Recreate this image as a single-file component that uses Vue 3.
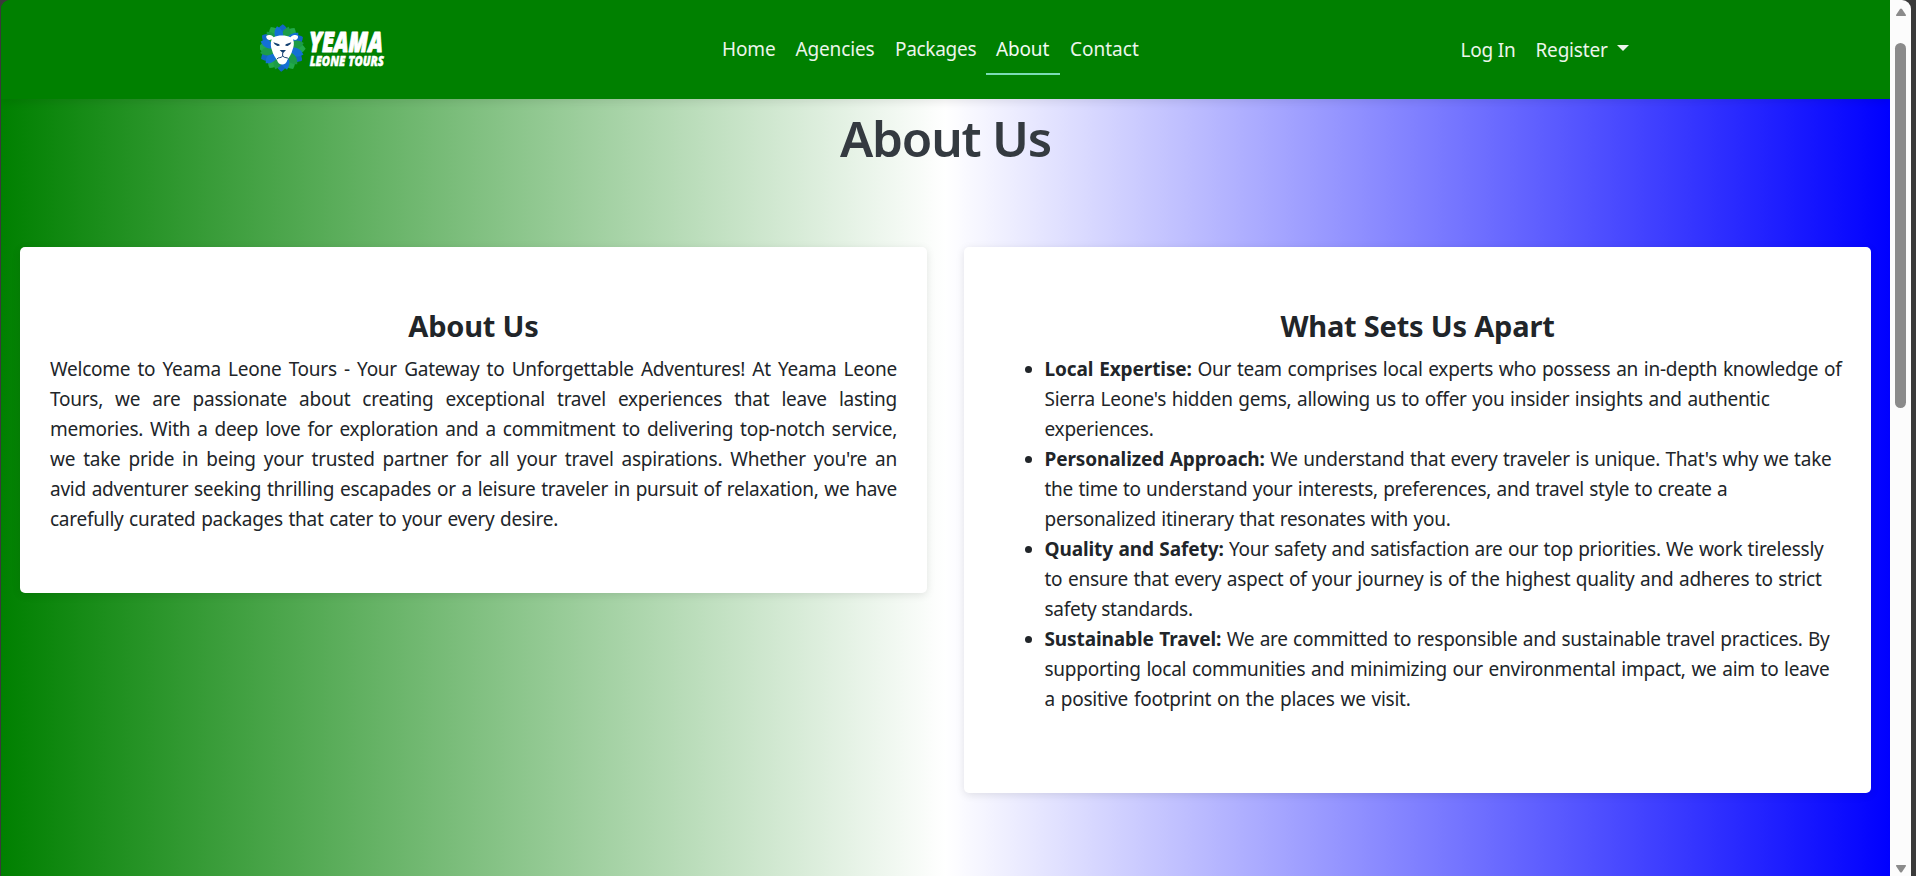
<script setup>
const links = [
  { text: 'Home', cls: 'home' },
  { text: 'Agencies', cls: 'agencies' },
  { text: 'Packages', cls: 'packages' },
  { text: 'About', cls: 'about active' },
  { text: 'Contact', cls: 'contact' },
]

const intro = [
  { text: 'Welcome to Yeama Leone Tours - Your Gateway to Unforgettable Adventures! At Yeama Leone', w: 847 },
  { text: 'Tours, we are passionate about creating exceptional travel experiences that leave lasting', w: 847 },
  { text: 'memories. With a deep love for exploration and a commitment to delivering top-notch service,', w: 847 },
  { text: "we take pride in being your trusted partner for all your travel aspirations. Whether you're an", w: 847 },
  { text: 'avid adventurer seeking thrilling escapades or a leisure traveler in pursuit of relaxation, we have', w: 847 },
  { text: 'carefully curated packages that cater to your every desire.', w: 508 },
]

const points = [
  {
    title: 'Local Expertise:',
    lines: [
      { text: 'Our team comprises local experts who possess an in-depth knowledge of', w: 797 },
      { text: "Sierra Leone's hidden gems, allowing us to offer you insider insights and authentic", w: 725 },
      { text: 'experiences.', w: 108 },
    ],
  },
  {
    title: 'Personalized Approach:',
    lines: [
      { text: "We understand that every traveler is unique. That's why we take", w: 787 },
      { text: 'the time to understand your interests, preferences, and travel style to create a', w: 683 },
      { text: 'personalized itinerary that resonates with you.', w: 406 },
    ],
  },
  {
    title: 'Quality and Safety:',
    lines: [
      { text: 'Your safety and satisfaction are our top priorities. We work tirelessly', w: 779 },
      { text: 'to ensure that every aspect of your journey is of the highest quality and adheres to strict', w: 777 },
      { text: 'safety standards.', w: 148 },
    ],
  },
  {
    title: 'Sustainable Travel:',
    lines: [
      { text: 'We are committed to responsible and sustainable travel practices. By', w: 785 },
      { text: 'supporting local communities and minimizing our environmental impact, we aim to leave', w: 785 },
      { text: 'a positive footprint on the places we visit.', w: 366 },
    ],
  },
]

const outerLeaves = Array.from({ length: 12 }, (_, i) => ({ a: i * 30 + 2, c: i % 2 ? '#22a94a' : '#1266c4' }))
const innerLeaves = Array.from({ length: 12 }, (_, i) => ({ a: i * 30 + 17, c: i % 2 ? '#1470d4' : '#1c9c48' }))
</script>

<template>
  <div class="window">
    <div class="page">
      <header class="nav">
        <svg class="logo" viewBox="30 9 378 210" width="126" height="70">
          <g>
            <path v-for="l in outerLeaves" :key="'o' + l.a" :fill="l.c" :transform="`translate(96 114) rotate(${l.a})`" d="M0 -71 C20 -58 24 -38 8 -20 L-8 -20 C-24 -38 -20 -58 0 -71Z" />
            <path v-for="l in innerLeaves" :key="'i' + l.a" :fill="l.c" :transform="`translate(96 114) rotate(${l.a})`" d="M0 -67 C15 -54 17 -36 5 -20 L-5 -20 C-17 -36 -15 -54 0 -67Z" />
          </g>
          <path fill="#fff" d="M65 88 C52 97 42 76 54 76 C62 73 68 77 71 82 C82 75 110 75 121 82 C125 77 131 73 139 76 C150 76 142 97 129 88 C134 99 131 111 127 121 C124 134 117 142 112 150 C108 168 85 168 81 150 C76 142 69 134 66 121 C62 111 61 99 65 88Z" />
          <path fill="#123f70" d="M70 97 L88 103 L89 107 L82 108 L74 103Z M124 97 L107 103 L106 107 L113 108 L121 103Z M89 120 L108 120 L99 130Z" />
          <path fill="none" stroke="#123f70" stroke-width="3" d="M98 129V139 M98 138 C92 146 86 140 81 147 M98 138 C105 146 111 140 116 147" />
          <text class="brand" x="177" y="125" font-size="84" textLength="221" lengthAdjust="spacingAndGlyphs">YEAMA</text>
          <text class="brand small" x="179" y="167" font-size="43" textLength="223" lengthAdjust="spacingAndGlyphs">LEONE TOURS</text>
        </svg>
        <nav class="links">
          <a v-for="l in links" :key="l.text" :class="['link', l.cls]">{{ l.text }}</a>
        </nav>
        <div class="account">
          <a class="login">Log In</a>
          <a class="register">Register</a>
          <span class="caret"></span>
        </div>
      </header>

      <h1>About Us</h1>

      <main class="cards">
        <section class="card">
          <h2>About Us</h2>
          <p>
            <span v-for="(line, i) in intro" :key="i" class="line" :style="{ width: line.w + 'px' }">{{ line.text }}</span>
          </p>
        </section>
        <section class="card tall">
          <h2>What Sets Us Apart</h2>
          <ul>
            <li v-for="p in points" :key="p.title">
              <span v-for="(line, i) in p.lines" :key="i" class="line" :style="{ width: line.w + 'px' }"><b v-if="i === 0">{{ p.title }}</b>{{ i === 0 ? ' ' : '' }}{{ line.text }}</span>
            </li>
          </ul>
        </section>
      </main>
    </div>
    <div class="scroll">
      <svg width="12" height="9" viewBox="0 0 12 9"><path d="M5 1 Q6 0 7 1 L11 7 Q11.500 8 10 8 H2 Q.5 8 1 7Z" fill="#8b8b8b" /></svg>
      <div class="thumb"></div>
      <svg class="down" width="12" height="9" viewBox="0 0 12 9"><path d="M5 8 Q6 9 7 8 L11 2 Q11.500 1 10 1 H2 Q.5 1 1 2Z" fill="#8b8b8b" /></svg>
    </div>
  </div>
</template>

<style>
body {
  margin: 0;
  background: #3a3a3a;
  overflow: hidden;
}
</style>

<style scoped>
* {
  box-sizing: border-box;
}
.window {
  display: flex;
  width: 1910px;
  height: 876px;
  margin-left: 1px;
  border-radius: 9px 9px 0 0;
  overflow: hidden;
  font-family: 'Noto Sans', 'Open Sans', sans-serif;
  font-size: 19px;
  line-height: 30px;
  color: #212529;
}
.page {
  width: 1889px;
  height: 876px;
  background: linear-gradient(to right, green, white, blue);
}
.nav {
  display: flex;
  height: 99px;
  padding-left: 259px;
  background: green;
  box-shadow: 0 2px 10px rgba(0, 0, 0, 0.1);
  color: #ebf5eb;
  letter-spacing: -0.15px;
}
.logo {
  flex: none;
  margin-top: 13px;
}
.brand {
  font-family: 'Open Sans', sans-serif;
  font-weight: 800;
  font-style: italic;
  letter-spacing: 0;
  fill: #fff;
  stroke: #fff;
  stroke-width: 3;
  stroke-linejoin: round;
}
.small {
  stroke-width: 1.5;
}
.links {
  display: flex;
  margin-left: 326px;
  padding-top: 34px;
}
.link {
  height: 41px;
  padding-left: 10px;
  white-space: nowrap;
}
.home { width: 73.5px; }
.agencies { width: 99.500px; }
.packages { width: 101px; letter-spacing: -0.3px; }
.about { width: 74px; }
.contact { width: 90px; letter-spacing: 0; }
.active {
  color: #f2faf2;
  border-bottom: 2px solid #7bdcb5;
}
.account {
  display: flex;
  margin-left: 310.500px;
  padding-top: 35px;
  letter-spacing: -0.2px;
}
.login { width: 75px; }
.register { width: 81.500px; }
.caret {
  width: 12px;
  height: 6px;
  margin-top: 10px;
  border: 6px solid transparent;
  border-top-color: #ebf5eb;
  border-bottom: 0;
}
h1 {
  margin: 9px 0 79px;
  height: 60px;
  line-height: 60px;
  font-size: 49.500px;
  font-weight: 600;
  letter-spacing: -1.2px;
  text-align: center;
  color: #343a40;
}
.cards {
  display: flex;
  align-items: flex-start;
  gap: 37px;
  padding-left: 19px;
}
.card {
  width: 907px;
  height: 346px;
  padding: 61px 30px;
  background: #fff;
  border-radius: 5px;
  box-shadow: 0 2px 8px rgba(0, 0, 0, 0.1);
}
.tall {
  height: 546px;
}
h2 {
  margin: 0 0 10px;
  height: 36px;
  line-height: 36px;
  font-size: 29px;
  font-weight: 700;
  letter-spacing: -0.2px;
  text-align: center;
}
p {
  margin: 0;
}
ul {
  margin: 0;
  padding-left: 50.500px;
}
b {
  letter-spacing: -0.1px;
}
.line {
  display: block;
  white-space: nowrap;
  text-align: justify;
  text-align-last: justify;
  letter-spacing: -0.25px;
}
.scroll {
  display: flex;
  flex-direction: column;
  align-items: center;
  width: 21px;
  height: 876px;
  padding-top: 8px;
  background: #fcfcfc;
}
.thumb {
  width: 11px;
  height: 365px;
  margin-top: 26px;
  border-radius: 6px;
  background: #8b8b8b;
}
.down {
  margin-top: 456px;
}
</style>
